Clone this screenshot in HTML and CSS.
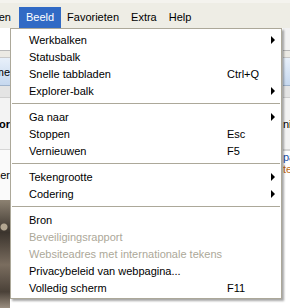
FILE: index.html
```html
<!DOCTYPE html>
<html lang="nl">
<head>
    <meta charset="UTF-8">
    <title>Beeld menu</title>
    <link rel="stylesheet" href="styles.css">
</head>
<body>
    <div class="window">
        <div class="menubar">
            <span class="menu-title cut">Bewerken</span>
            <span class="menu-title active">Beeld</span>
            <span class="menu-title">Favorieten</span>
            <span class="menu-title">Extra</span>
            <span class="menu-title">Help</span>
        </div>

        <div class="page">
            <div class="strip left">
                <div class="band address"></div>
                <div class="band rule"></div>
                <div class="band tabs"><span class="edge">Home</span></div>
                <div class="band gap"></div>
                <div class="band side"><span class="edge bold">Sponsor</span></div>
                <div class="band note"><span class="edge">Lezer</span></div>
                <div class="band photo"></div>
            </div>
            <div class="strip middle"></div>
            <div class="strip right">
                <div class="band address grey"></div>
                <div class="band rule"></div>
                <div class="band tabs"></div>
                <div class="band gap"></div>
                <div class="band side"><span class="start">nieuws</span></div>
                <div class="band links"><span class="start blue">pagina</span><span class="start orange">tekst</span></div>
                <div class="band plain"></div>
            </div>
        </div>

        <!-- opened "Beeld" dropdown -->
        <div class="dropdown">
            <div class="item"><span>Werkbalken</span><span></span><i class="arrow"></i></div>
            <div class="item"><span>Statusbalk</span></div>
            <div class="item"><span>Snelle tabbladen</span><span class="key">Ctrl+Q</span></div>
            <div class="item"><span>Explorer-balk</span><span></span><i class="arrow"></i></div>
            <div class="sep"></div>
            <div class="item"><span>Ga naar</span><span></span><i class="arrow"></i></div>
            <div class="item"><span>Stoppen</span><span class="key">Esc</span></div>
            <div class="item"><span>Vernieuwen</span><span class="key">F5</span></div>
            <div class="sep"></div>
            <div class="item"><span>Tekengrootte</span><span></span><i class="arrow"></i></div>
            <div class="item"><span>Codering</span><span></span><i class="arrow"></i></div>
            <div class="sep"></div>
            <div class="item"><span>Bron</span></div>
            <div class="item disabled"><span>Beveiligingsrapport</span></div>
            <div class="item disabled"><span>Websiteadres met internationale tekens</span></div>
            <div class="item"><span>Privacybeleid van webpagina...</span></div>
            <div class="item"><span>Volledig scherm</span><span class="key">F11</span></div>
        </div>
    </div>
</body>
</html>
```

FILE: styles.css
```css
body {
    margin: 0;
    font-family: "Liberation Sans", Arial, sans-serif;
    font-size: 11px;
    color: #000;
    background: #fff;
}
.window {
    position: relative;
    width: 290px;
    height: 308px;
    overflow: hidden;
}
.menubar {
    display: flex;
    align-items: flex-end;
    height: 28px;
    background: #eeede5;
    box-sizing: border-box;
    border-top: 3px solid #f4f3ee;
    margin-left: -44px;
}
.menu-title {
    padding: 0 6px;
    height: 21px;
    line-height: 21px;
}
.menu-title.active {
    background: #316ac5;
    color: #fff;
    padding: 0 7px;
    margin-left: 2px;
}
.page {
    display: grid;
    grid-template-columns: 10px 1fr 7px;
    height: 280px;
}
.strip {
    display: flex;
    flex-direction: column;
    overflow: hidden;
}
.band {
    display: flex;
    align-items: center;
    justify-content: flex-end;
    white-space: nowrap;
}
.right .band {
    justify-content: flex-start;
}
.address { height: 22px; background: #fff; }
.address.grey { background: #f2f2f2; }
.rule {
    height: 8px;
    background: #eceae4;
    border-top: 1px solid #b9b9b9;
    border-bottom: 1px solid #c9c9c9;
    box-sizing: border-box;
}
.tabs {
    height: 28px;
    background: linear-gradient(#e8f0fa, #c6d8ef);
    border-bottom: 1px solid #9fb3cc;
    box-sizing: border-box;
}
.gap {
    height: 12px;
    background: #e4e4e4;
    border-bottom: 1px solid #cfcfcf;
    box-sizing: border-box;
}
.side {
    height: 52px;
    background: #f3f3f3;
    border-bottom: 1px solid #d6d6d6;
    box-sizing: border-box;
}
.note { height: 50px; background: #fafafa; }
.links {
    height: 50px;
    flex-direction: column;
    align-items: flex-start;
    justify-content: center;
    background: #fff;
    border-top: 1px solid #d6d6d6;
}
.plain { flex: 1; background: #fff; }
.photo {
    flex: 1;
    background:
        radial-gradient(circle at 40% 25%, #b3a691 0 3px, transparent 4px),
        linear-gradient(#8d8272, #3b342d 30%, #7a6d5f 60%, #4a4138 85%, #9a8e80);
}
.middle { background: #fff; }
.bold { font-weight: bold; }
.blue { color: #1d4fa6; }
.orange { color: #c06a12; }

.dropdown {
    position: absolute;
    left: 10px;
    top: 28px;
    width: 272px;
    box-sizing: border-box;
    background: #fff;
    border: 1px solid #aca899;
    padding: 2px 0;
    box-shadow: 2px 2px 2px rgba(0, 0, 0, 0.35);
}
.item {
    display: grid;
    grid-template-columns: 1fr 40px 14px;
    align-items: center;
    height: 17px;
    padding-left: 18px;
    white-space: nowrap;
}
.item.disabled {
    color: #aca899;
}
.key {
    grid-column: 2;
}
.arrow {
    grid-column: 3;
    width: 0;
    height: 0;
    margin-left: 4px;
    border-left: 4px solid #000;
    border-top: 4px solid transparent;
    border-bottom: 4px solid transparent;
}
.sep {
    height: 4px;
    margin: 0 1px 4px;
    border-bottom: 1px solid #aca899;
}
```
